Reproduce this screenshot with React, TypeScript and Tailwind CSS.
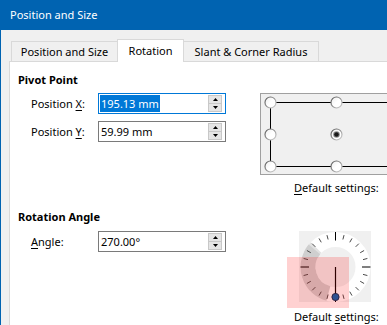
import React from "react";

function Spinner() {
  return (
    <div className="flex flex-col mr-[3px] w-[14px]">
      <div className="h-[9px] bg-[#e5e5e5] border border-[#c8c8c8] flex items-center justify-center">
        <svg width="5" height="3" viewBox="0 0 5 3">
          <polygon points="0,3 2.5,0 5,3" fill="#000" />
        </svg>
      </div>
      <div className="h-[8px] bg-[#e5e5e5] border border-t-0 border-[#c8c8c8] flex items-center justify-center">
        <svg width="5" height="3" viewBox="0 0 5 3">
          <polygon points="0,0 5,0 2.5,3" fill="#000" />
        </svg>
      </div>
    </div>
  );
}

function Field({
  label,
  value,
  focused,
}: {
  label: React.ReactNode;
  value: string;
  focused?: boolean;
}) {
  return (
    <div className="flex items-center h-[21px]">
      <div className="w-[67px] leading-[16px]">{label}</div>
      <div
        className={
          focused
            ? "w-[128px] h-[21px] border border-[#0078d7] bg-white flex items-center"
            : "w-[128px] h-[21px] border border-[#7a7a7a] bg-white flex items-center"
        }
      >
        <div className={focused ? "flex-1 pl-[1px] flex items-center" : "flex-1 pl-[2px] flex items-center"}>
          {focused ? (
            <span className="bg-[#0078d7] text-white leading-[17px] px-[1px]">{value}</span>
          ) : (
            <span className="leading-[17px]">{value}</span>
          )}
        </div>
        <Spinner />
      </div>
    </div>
  );
}

function Radio({ x, y, selected }: { x: number; y: number; selected?: boolean }) {
  return (
    <g>
      <circle cx={x} cy={y} r={5.5} fill="url(#radioFill)" stroke="url(#radioStroke)" strokeWidth={1.2} />
      {selected && (
        <>
          <circle cx={x} cy={y} r={3.3} fill="#8c8c8c" />
          <circle cx={x} cy={y} r={2.3} fill="#1a1a1a" />
        </>
      )}
    </g>
  );
}

function PivotBox() {
  const xs = [9.5, 75.5, 141.5];
  const ys = [8.5, 40.5, 72.5];
  return (
    <div className="w-[152px] h-[82px] border border-[#a0a0a0] bg-[#f0f0f0]">
      <svg width="150" height="80" viewBox="0 0 150 80">
        <defs>
          <linearGradient id="radioStroke" x1="0" y1="0" x2="1" y2="1">
            <stop offset="0" stopColor="#555555" />
            <stop offset="1" stopColor="#d5d5d5" />
          </linearGradient>
          <linearGradient id="radioFill" x1="0" y1="0" x2="1" y2="1">
            <stop offset="0" stopColor="#ececec" />
            <stop offset="0.5" stopColor="#ffffff" />
            <stop offset="1" stopColor="#ffffff" />
          </linearGradient>
        </defs>
        <rect x={9.5} y={8.5} width={132} height={64} fill="none" stroke="#000" strokeWidth={1} />
        {ys.map((y, j) =>
          xs.map((x, i) =>
            i === 1 && j === 1 ? (
              <Radio key={`${i}-${j}`} x={x} y={y} selected />
            ) : (
              <Radio key={`${i}-${j}`} x={x} y={y} />
            )
          )
        )}
      </svg>
    </div>
  );
}

function Dial() {
  const cx = 36.5;
  const cy = 36;
  const rMid = 27.5;
  const pt = (deg: number, r: number) => {
    const a = (deg * Math.PI) / 180;
    return [cx + r * Math.cos(a), cy - r * Math.sin(a)];
  };
  const [sx, sy] = pt(140, rMid);
  const [ex, ey] = pt(255, rMid);
  const [s2x, s2y] = pt(135, rMid);
  const [e2x, e2y] = pt(150, rMid);
  const ticks = Array.from({ length: 24 }, (_, i) => i * 15);
  return (
    <div className="relative w-[72px] h-[71px]">
      <svg width="72" height="71" viewBox="0 0 72 71">
        <rect x={0} y={0} width={72} height={71} fill="#f0f0f0" />
        <circle cx={cx} cy={cy} r={rMid} fill="none" stroke="#ffffff" strokeWidth={15} />
        <path d={`M ${s2x} ${s2y} A ${rMid} ${rMid} 0 0 0 ${e2x} ${e2y}`} fill="none" stroke="#e2e2e2" strokeWidth={15} />
        <path d={`M ${sx} ${sy} A ${rMid} ${rMid} 0 0 0 ${ex} ${ey}`} fill="none" stroke="#cfcfcf" strokeWidth={15} />
        {ticks.map((d) => {
          const long = d % 90 === 0;
          const [x1, y1] = pt(d, long ? 26.5 : 28.5);
          const [x2, y2] = pt(d, long ? 35 : 33);
          return (
            <line
              key={d}
              x1={x1}
              y1={y1}
              x2={x2}
              y2={y2}
              stroke={long ? "#000000" : "#4a4a4a"}
              strokeWidth={1}
            />
          );
        })}
        <line x1={cx} y1={cy} x2={cx} y2={66} stroke="#000" strokeWidth={1.2} />
        <circle cx={cx} cy={66} r={3.6} fill="#0063b1" stroke="#002a50" strokeWidth={1} />
      </svg>
      <div className="absolute left-[-12px] top-[26px] w-[62px] h-[51px] bg-[rgba(255,0,0,0.18)]" />
    </div>
  );
}

export default function App() {
  return (
    <div className="w-[387px] h-[325px] overflow-hidden bg-[#f0f0f0] text-[11px] text-black font-['Noto_Sans',sans-serif]">
      <div className="h-[30px] bg-[#0063b1] text-white flex items-center pl-[10px]">
        <span className="leading-[16px]">Position and Size</span>
      </div>
      <div className="h-[295px] border-l border-[#0063b1] pl-[8px] pt-[9px] flex flex-col">
        <div className="flex items-end h-[22px] pl-[2px]">
          <div className="h-[20px] w-[107px] border border-b-0 border-[#d9d9d9] bg-[#f0f0f0] flex items-center justify-center leading-[16px]">
            Position and Size
          </div>
          <div className="relative z-10 -ml-px -mb-px h-[23px] w-[67px] border border-b-0 border-[#d9d9d9] bg-white flex items-center justify-center leading-[16px]">
            Rotation
          </div>
          <div className="-ml-px h-[20px] w-[136px] border border-b-0 border-[#d9d9d9] bg-[#f0f0f0] flex items-center justify-center leading-[16px]">
            Slant &amp; Corner Radius
          </div>
        </div>
        <div className="w-[420px] shrink-0 flex-1 border border-[#d9d9d9] bg-white flex">
          <div className="w-[250px] shrink-0 pl-[8px] pt-[10px] flex flex-col">
            <div className="font-bold leading-[16px]">Pivot Point</div>
            <div className="mt-[5px] pl-[13px] flex flex-col gap-[7px]">
              <Field
                label={
                  <>
                    Position <span className="underline underline-offset-2">X</span>:
                  </>
                }
                value="195.13 mm"
                focused
              />
              <Field
                label={
                  <>
                    Position <span className="underline underline-offset-2">Y</span>:
                  </>
                }
                value="59.99 mm"
              />
            </div>
            <div className="mt-[67px] font-bold leading-[16px]">Rotation Angle</div>
            <div className="mt-[6px] pl-[13px]">
              <Field
                label={
                  <>
                    <span className="underline underline-offset-2">A</span>ngle:
                  </>
                }
                value="270.00°"
              />
            </div>
          </div>
          <div className="w-[160px] shrink-0 pt-[31px] flex flex-col">
            <PivotBox />
            <div className="mt-[5px] leading-[16px] pl-[34px]">
              <span className="underline underline-offset-2">D</span>efault settings:
            </div>
            <div className="mt-[35px] ml-[39px]">
              <Dial />
            </div>
            <div className="mt-[7px] leading-[16px] pl-[34px]">
              Default <span className="underline underline-offset-2">s</span>ettings:
            </div>
          </div>
        </div>
      </div>
    </div>
  );
}
